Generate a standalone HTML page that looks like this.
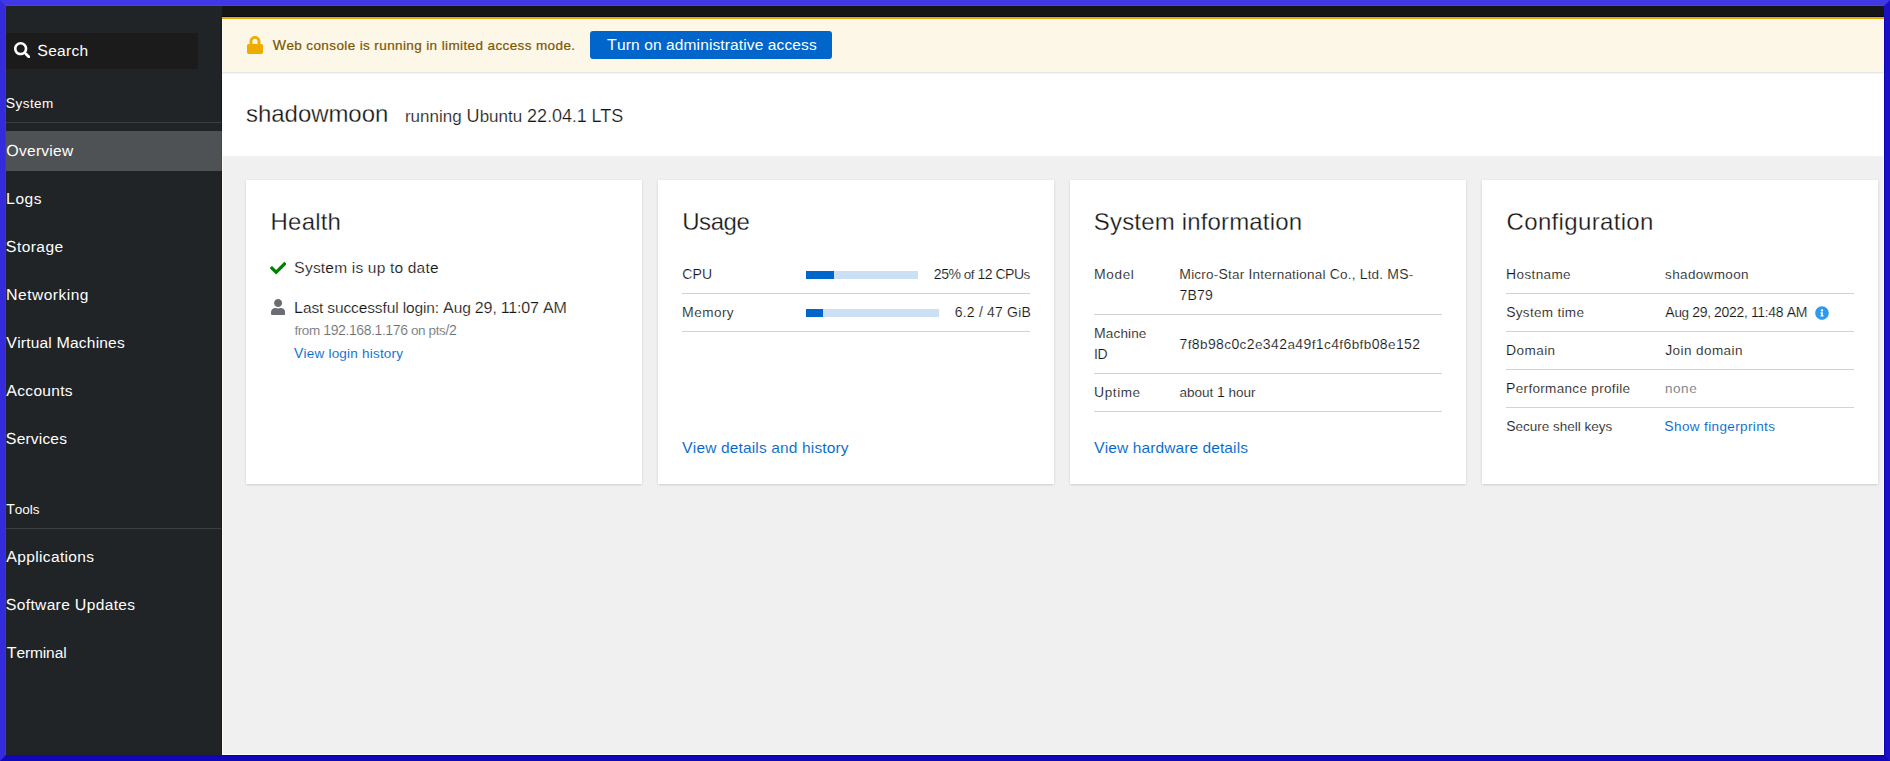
<!DOCTYPE html>
<html><head><meta charset="utf-8"><title>shadowmoon - Overview</title>
<style>
html,body{margin:0;padding:0;}
body{width:1890px;height:761px;overflow:hidden;position:relative;background:#f0f0f0;font-family:"Liberation Sans",sans-serif;}
.a{position:absolute;display:block}
.t{position:absolute;white-space:pre;line-height:1;text-rendering:auto;font-family:"Liberation Sans",sans-serif}
.t b{font-weight:normal}
#frame{position:absolute;left:0;top:0;width:1878px;height:749px;border-style:solid;border-width:6px;border-color:#4038e4 #1c10c4 #1008b8 #342cdc;pointer-events:none}
</style></head><body>
<div class="a" style="left:222px;top:6px;width:1662px;height:749px;background:#f0f0f0"></div>
<div class="a" style="left:6px;top:6px;width:216px;height:749px;background:#212427"></div>
<div class="a" style="left:6px;top:33px;width:192px;height:36px;background:#1b1b1b"></div>
<div class="a" style="left:6px;top:122px;width:216px;height:1px;background:#3c3f42"></div>
<div class="a" style="left:6px;top:131px;width:216px;height:40px;background:#4f5255"></div>
<div class="a" style="left:6px;top:528px;width:216px;height:1px;background:#3c3f42"></div>
<svg class="a" style="left:14px;top:42px" width="16.4" height="16.4" viewBox="0 0 512 512" preserveAspectRatio="none"><path fill="#fff" d="M505 442.7L405.3 343c-4.500-4.500-10.600-7-17-7H372c27.600-35.300 44-79.700 44-128C416 93.100 322.900 0 208 0S0 93.100 0 208s93.100 208 208 208c48.300 0 92.700-16.400 128-44v16.300c0 6.400 2.500 12.500 7 17l99.700 99.700c9.400 9.400 24.600 9.400 33.900 0l28.300-28.300c9.400-9.400 9.400-24.600.100-34zM208 336c-70.700 0-128-57.200-128-128 0-70.700 57.200-128 128-128 70.700 0 128 57.200 128 128 0 70.700-57.200 128-128 128z"/></svg>
<div class="a" style="left:222px;top:6px;width:1662px;height:11px;background:#151515"></div>
<div class="a" style="left:222px;top:17px;width:1662px;height:2px;background:#f0ab00"></div>
<div class="a" style="left:222px;top:72px;width:1662px;height:84px;background:#fff"></div>
<div class="a" style="left:222px;top:19px;width:1662px;height:53px;background:#fdf7e7;box-shadow:0 1px 2px 0 rgba(3,3,3,.12),0 0 2px 0 rgba(3,3,3,.06)"></div>
<svg class="a" style="left:247px;top:36px" width="16" height="18" viewBox="0 0 448 512" preserveAspectRatio="none"><path fill="#f0ab00" d="M400 224h-24v-72C376 68.200 307.800 0 224 0S72 68.200 72 152v72H48c-26.500 0-48 21.500-48 48v192c0 26.500 21.500 48 48 48h352c26.500 0 48-21.500 48-48V272c0-26.500-21.500-48-48-48zm-104 0H152v-72c0-39.700 32.300-72 72-72s72 32.300 72 72v72z"/></svg>
<div class="a" style="left:590px;top:31px;width:242px;height:28px;background:#0066cc;border-radius:3px"></div>
<div class="a" style="left:246px;top:180px;width:396px;height:304px;background:#fff;box-shadow:0 1px 2px 0 rgba(3,3,3,.12),0 0 2px 0 rgba(3,3,3,.06)"></div>
<div class="a" style="left:658px;top:180px;width:396px;height:304px;background:#fff;box-shadow:0 1px 2px 0 rgba(3,3,3,.12),0 0 2px 0 rgba(3,3,3,.06)"></div>
<div class="a" style="left:1070px;top:180px;width:396px;height:304px;background:#fff;box-shadow:0 1px 2px 0 rgba(3,3,3,.12),0 0 2px 0 rgba(3,3,3,.06)"></div>
<div class="a" style="left:1482px;top:180px;width:396px;height:304px;background:#fff;box-shadow:0 1px 2px 0 rgba(3,3,3,.12),0 0 2px 0 rgba(3,3,3,.06)"></div>
<svg class="a" style="left:269.8px;top:260px" width="16.4" height="16.4" viewBox="0 0 512 512" preserveAspectRatio="none"><path fill="#008000" d="M173.898 439.404l-166.400-166.400c-9.997-9.997-9.997-26.206 0-36.204l36.203-36.204c9.997-9.998 26.207-9.998 36.204 0L192 312.690 432.095 72.596c9.997-9.997 26.207-9.997 36.204 0l36.203 36.204c9.997 9.997 9.997 26.206 0 36.204l-294.400 294.401c-9.998 9.997-26.207 9.997-36.204-.001z"/></svg>
<svg class="a" style="left:271px;top:299px" width="14.2" height="16.2" viewBox="0 0 448 512" preserveAspectRatio="none"><path fill="#6a6e73" d="M224 256c70.700 0 128-57.300 128-128S294.700 0 224 0 96 57.300 96 128s57.300 128 128 128zm89.600 32h-16.700c-22.200 10.200-46.900 16-72.900 16s-50.600-5.800-72.900-16h-16.700C60.200 288 0 348.200 0 422.400V464c0 26.500 21.500 48 48 48h352c26.500 0 48-21.500 48-48v-41.600c0-74.200-60.200-134.400-134.400-134.400z"/></svg>
<div class="a" style="left:806px;top:271px;width:112px;height:8px;background:#cce0f5"></div>
<div class="a" style="left:806px;top:271px;width:28px;height:8px;background:#0066cc"></div>
<div class="a" style="left:682px;top:293px;width:348px;height:1px;background:#d2d2d2"></div>
<div class="a" style="left:806px;top:309px;width:133px;height:8px;background:#cce0f5"></div>
<div class="a" style="left:806px;top:309px;width:17px;height:8px;background:#0066cc"></div>
<div class="a" style="left:682px;top:331px;width:348px;height:1px;background:#d2d2d2"></div>
<div class="a" style="left:1094px;top:314px;width:348px;height:1px;background:#d2d2d2"></div>
<div class="a" style="left:1094px;top:373px;width:348px;height:1px;background:#d2d2d2"></div>
<div class="a" style="left:1094px;top:411px;width:348px;height:1px;background:#d2d2d2"></div>
<div class="a" style="left:1506px;top:293px;width:348px;height:1px;background:#d2d2d2"></div>
<div class="a" style="left:1506px;top:331px;width:348px;height:1px;background:#d2d2d2"></div>
<div class="a" style="left:1506px;top:369px;width:348px;height:1px;background:#d2d2d2"></div>
<div class="a" style="left:1506px;top:407px;width:348px;height:1px;background:#d2d2d2"></div>
<svg class="a" style="left:1815px;top:306px" width="14" height="14" viewBox="0 0 512 512" preserveAspectRatio="none"><path fill="#2b9af3" d="M256 8C119.043 8 8 119.083 8 256c0 136.997 111.043 248 248 248s248-111.003 248-248C504 119.083 392.957 8 256 8zm0 110c23.196 0 42 18.804 42 42s-18.804 42-42 42-42-18.804-42-42 18.804-42 42-42zm56 254c0 6.627-5.373 12-12 12h-88c-6.627 0-12-5.373-12-12v-24c0-6.627 5.373-12 12-12h12v-64h-12c-6.627 0-12-5.373-12-12v-24c0-6.627 5.373-12 12-12h64c6.627 0 12 5.373 12 12v100h12c6.627 0 12 5.373 12 12v24z"/></svg>
<div class="a" style="left:221px;top:19px;width:1px;height:112px;background:#181b1d"></div>
<div class="a" style="left:221px;top:131px;width:1px;height:40px;background:#46494c"></div>
<div class="a" style="left:221px;top:171px;width:1px;height:584px;background:#181b1d"></div>
<div class="a" style="left:222px;top:156px;width:1px;height:599px;background:#fdfdf6"></div>
<div class="a" style="left:222px;top:20px;width:1px;height:52px;background:#fffcf2"></div>
<div class="a" style="left:222px;top:754px;width:1662px;height:1px;background:#fdfdf6"></div>
<div class="a" style="left:1883px;top:156px;width:1px;height:599px;background:#fdfdf6"></div>
<div class="a" style="left:222px;top:16px;width:1662px;height:1px;background:#03081a"></div>
<div class="a" style="left:222px;top:19px;width:1662px;height:1px;background:#fffcf3"></div>
<span class="t" style="left:37.15px;top:43px;font-size:15.5px;letter-spacing:0.321px;color:#ffffff;"><b style="font-size:16px;text-rendering:geometricPrecision;">S</b>earch</span>
<span class="t" style="left:5.74px;top:96px;font-size:13.5px;letter-spacing:0.443px;color:#ffffff;"><b style="font-size:14px;">S</b>ystem</span>
<span class="t" style="left:6.23px;top:143px;font-size:15.5px;letter-spacing:0.280px;color:#ffffff;"><b style="font-size:16px;text-rendering:geometricPrecision;">O</b>verview</span>
<span class="t" style="left:6.02px;top:191px;font-size:15.5px;letter-spacing:0.501px;color:#ffffff;"><b style="font-size:16px;text-rendering:geometricPrecision;">L</b>ogs</span>
<span class="t" style="left:5.75px;top:239px;font-size:15.5px;letter-spacing:0.452px;color:#ffffff;"><b style="font-size:16px;text-rendering:geometricPrecision;">S</b>torage</span>
<span class="t" style="left:6.02px;top:287px;font-size:15.5px;letter-spacing:0.498px;color:#ffffff;"><b style="font-size:16px;text-rendering:geometricPrecision;">N</b>etworking</span>
<span class="t" style="left:6.25px;top:335px;font-size:15.5px;letter-spacing:0.204px;color:#ffffff;"><b style="font-size:16px;text-rendering:geometricPrecision;">V</b>irtual <b style="font-size:16px;text-rendering:geometricPrecision;">M</b>achines</span>
<span class="t" style="left:6.28px;top:383px;font-size:15.5px;letter-spacing:0.319px;color:#ffffff;"><b style="font-size:16px;text-rendering:geometricPrecision;">A</b>ccounts</span>
<span class="t" style="left:5.75px;top:431px;font-size:15.5px;letter-spacing:0.197px;color:#ffffff;"><b style="font-size:16px;text-rendering:geometricPrecision;">S</b>ervices</span>
<span class="t" style="left:6.24px;top:502px;font-size:13.5px;letter-spacing:0.009px;color:#ffffff;"><b style="font-size:14px;">T</b>ools</span>
<span class="t" style="left:6.28px;top:549px;font-size:15.5px;letter-spacing:0.349px;color:#ffffff;"><b style="font-size:16px;text-rendering:geometricPrecision;">A</b>pplications</span>
<span class="t" style="left:5.75px;top:597px;font-size:15.5px;letter-spacing:0.358px;color:#ffffff;"><b style="font-size:16px;text-rendering:geometricPrecision;">S</b>oftware <b style="font-size:16px;text-rendering:geometricPrecision;">U</b>pdates</span>
<span class="t" style="left:6.79px;top:645px;font-size:15.5px;letter-spacing:-0.117px;color:#ffffff;"><b style="font-size:16px;text-rendering:geometricPrecision;">T</b>erminal</span>
<span class="t" style="left:272.81px;top:38px;font-size:13.5px;letter-spacing:0.386px;color:#795600;-webkit-text-stroke:0.2px #795600;"><b style="font-size:14px;">W</b>eb console is running in limited access mode.</span>
<span class="t" style="left:607.09px;top:37px;font-size:15.5px;letter-spacing:0.122px;color:#ffffff;"><b style="font-size:16px;text-rendering:geometricPrecision;">T</b>urn on administrative access</span>
<span class="t" style="left:246.12px;top:102px;font-size:24px;letter-spacing:-0.066px;color:#151515;-webkit-text-stroke:0.28px #ffffff;">shadowmoon</span>
<span class="t" style="left:404.95px;top:107px;font-size:17px;letter-spacing:0.026px;color:#151515;-webkit-text-stroke:0.22px #ffffff;">running <b style="font-size:18px;">U</b>buntu <b style="font-size:18px;">22</b>.<b style="font-size:18px;">04</b>.<b style="font-size:18px;">1</b> <b style="font-size:18px;">LTS</b></span>
<span class="t" style="left:270.59px;top:210px;font-size:24px;letter-spacing:0.189px;color:#151515;-webkit-text-stroke:0.28px #ffffff;">Health</span>
<span class="t" style="left:294.11px;top:260px;font-size:15.5px;letter-spacing:0.192px;color:#151515;-webkit-text-stroke:0.18px #ffffff;"><b style="font-size:16px;text-rendering:geometricPrecision;">S</b>ystem is up to date</span>
<span class="t" style="left:294.12px;top:300px;font-size:15.5px;letter-spacing:-0.127px;color:#151515;-webkit-text-stroke:0.18px #ffffff;"><b style="font-size:16px;text-rendering:geometricPrecision;">L</b>ast successful login: <b style="font-size:16px;text-rendering:geometricPrecision;">A</b>ug <b style="font-size:16px;text-rendering:geometricPrecision;">29</b>, <b style="font-size:16px;text-rendering:geometricPrecision;">11</b>:<b style="font-size:16px;text-rendering:geometricPrecision;">07</b> <b style="font-size:16px;text-rendering:geometricPrecision;">AM</b></span>
<span class="t" style="left:294.38px;top:323px;font-size:13.5px;letter-spacing:-0.375px;color:#6a6e73;-webkit-text-stroke:0.15px #ffffff;">from <b style="font-size:14px;">192</b>.<b style="font-size:14px;">168</b>.<b style="font-size:14px;">1</b>.<b style="font-size:14px;">176</b> on pts<b style="font-size:14px;">/2</b></span>
<span class="t" style="left:294.01px;top:346px;font-size:13.5px;letter-spacing:0.215px;color:#0066cc;-webkit-text-stroke:0.08px #ffffff;"><b style="font-size:14px;">V</b>iew login history</span>
<span class="t" style="left:682.15px;top:210px;font-size:24px;letter-spacing:-0.419px;color:#151515;-webkit-text-stroke:0.28px #ffffff;">Usage</span>
<span class="t" style="left:682.22px;top:267px;font-size:13.5px;letter-spacing:0.137px;color:#151515;-webkit-text-stroke:0.15px #ffffff;"><b style="font-size:14px;">CPU</b></span>
<span class="t" style="left:933.85px;top:267px;font-size:13.5px;letter-spacing:-0.459px;color:#151515;-webkit-text-stroke:0.15px #ffffff;"><b style="font-size:14px;">25%</b> of <b style="font-size:14px;">12</b> <b style="font-size:14px;">CPU</b>s</span>
<span class="t" style="left:682.05px;top:305px;font-size:13.5px;letter-spacing:0.477px;color:#151515;-webkit-text-stroke:0.15px #ffffff;"><b style="font-size:14px;">M</b>emory</span>
<span class="t" style="left:954.82px;top:305px;font-size:13.5px;letter-spacing:0.243px;color:#151515;-webkit-text-stroke:0.15px #ffffff;"><b style="font-size:14px;">6</b>.<b style="font-size:14px;">2</b> <b style="font-size:14px;">/</b> <b style="font-size:14px;">47</b> <b style="font-size:14px;">G</b>i<b style="font-size:14px;">B</b></span>
<span class="t" style="left:681.99px;top:440px;font-size:15.5px;letter-spacing:0.149px;color:#0066cc;-webkit-text-stroke:0.08px #ffffff;"><b style="font-size:16px;text-rendering:geometricPrecision;">V</b>iew details and history</span>
<span class="t" style="left:1093.84px;top:210px;font-size:24px;letter-spacing:0.164px;color:#151515;-webkit-text-stroke:0.28px #ffffff;">System information</span>
<span class="t" style="left:1094.05px;top:267px;font-size:13.5px;letter-spacing:0.646px;color:#151515;-webkit-text-stroke:0.15px #ffffff;"><b style="font-size:14px;">M</b>odel</span>
<span class="t" style="left:1179.25px;top:267px;font-size:13.5px;letter-spacing:0.217px;color:#151515;-webkit-text-stroke:0.15px #ffffff;"><b style="font-size:14px;">M</b>icro-<b style="font-size:14px;">S</b>tar <b style="font-size:14px;">I</b>nternational <b style="font-size:14px;">C</b>o., <b style="font-size:14px;">L</b>td. <b style="font-size:14px;">MS</b>-</span>
<span class="t" style="left:1179.44px;top:288px;font-size:13.5px;letter-spacing:0.251px;color:#151515;-webkit-text-stroke:0.15px #ffffff;"><b style="font-size:14px;">7B79</b></span>
<span class="t" style="left:1094.05px;top:326px;font-size:13.5px;letter-spacing:0.142px;color:#151515;-webkit-text-stroke:0.15px #ffffff;"><b style="font-size:14px;">M</b>achine</span>
<span class="t" style="left:1094.03px;top:347px;font-size:13.5px;letter-spacing:-0.427px;color:#151515;-webkit-text-stroke:0.15px #ffffff;"><b style="font-size:14px;">ID</b></span>
<span class="t" style="left:1179.44px;top:337px;font-size:13.5px;letter-spacing:0.394px;color:#151515;-webkit-text-stroke:0.15px #ffffff;"><b style="font-size:14px;">7</b>f<b style="font-size:14px;">8</b>b<b style="font-size:14px;">98</b>c<b style="font-size:14px;">0</b>c<b style="font-size:14px;">2</b>e<b style="font-size:14px;">342</b>a<b style="font-size:14px;">49</b>f<b style="font-size:14px;">1</b>c<b style="font-size:14px;">4</b>f<b style="font-size:14px;">6</b>bfb<b style="font-size:14px;">08</b>e<b style="font-size:14px;">152</b></span>
<span class="t" style="left:1094.08px;top:385px;font-size:13.5px;letter-spacing:0.571px;color:#151515;-webkit-text-stroke:0.15px #ffffff;"><b style="font-size:14px;">U</b>ptime</span>
<span class="t" style="left:1179.49px;top:385px;font-size:13.5px;letter-spacing:-0.004px;color:#151515;-webkit-text-stroke:0.15px #ffffff;">about <b style="font-size:14px;">1</b> hour</span>
<span class="t" style="left:1093.99px;top:440px;font-size:15.5px;letter-spacing:0.098px;color:#0066cc;-webkit-text-stroke:0.08px #ffffff;"><b style="font-size:16px;text-rendering:geometricPrecision;">V</b>iew hardware details</span>
<span class="t" style="left:1506.53px;top:210px;font-size:24px;letter-spacing:0.341px;color:#151515;-webkit-text-stroke:0.28px #ffffff;">Configuration</span>
<span class="t" style="left:1506.05px;top:267px;font-size:13.5px;letter-spacing:0.376px;color:#151515;-webkit-text-stroke:0.15px #ffffff;"><b style="font-size:14px;">H</b>ostname</span>
<span class="t" style="left:1665.09px;top:268px;font-size:13.5px;letter-spacing:0.349px;color:#151515;-webkit-text-stroke:0.15px #ffffff;">shadowmoon</span>
<span class="t" style="left:1506.13px;top:305px;font-size:13.5px;letter-spacing:0.318px;color:#151515;-webkit-text-stroke:0.15px #ffffff;"><b style="font-size:14px;">S</b>ystem time</span>
<span class="t" style="left:1665.35px;top:305px;font-size:13.5px;letter-spacing:-0.308px;color:#151515;-webkit-text-stroke:0.15px #ffffff;"><b style="font-size:14px;">A</b>ug <b style="font-size:14px;">29</b>, <b style="font-size:14px;">2022</b>, <b style="font-size:14px;">11</b>:<b style="font-size:14px;">48</b> <b style="font-size:14px;">AM</b></span>
<span class="t" style="left:1506.05px;top:343px;font-size:13.5px;letter-spacing:0.426px;color:#151515;-webkit-text-stroke:0.15px #ffffff;"><b style="font-size:14px;">D</b>omain</span>
<span class="t" style="left:1665.16px;top:343px;font-size:13.5px;letter-spacing:0.422px;color:#151515;-webkit-text-stroke:0.15px #ffffff;"><b style="font-size:14px;">J</b>oin domain</span>
<span class="t" style="left:1506.05px;top:381px;font-size:13.5px;letter-spacing:0.327px;color:#151515;-webkit-text-stroke:0.15px #ffffff;"><b style="font-size:14px;">P</b>erformance profile</span>
<span class="t" style="left:1664.93px;top:382px;font-size:13.5px;letter-spacing:0.586px;color:#6a6e73;-webkit-text-stroke:0.15px #ffffff;">none</span>
<span class="t" style="left:1506.13px;top:419px;font-size:13.5px;letter-spacing:-0.009px;color:#151515;-webkit-text-stroke:0.15px #ffffff;"><b style="font-size:14px;">S</b>ecure shell keys</span>
<span class="t" style="left:1664.33px;top:419px;font-size:13.5px;letter-spacing:0.375px;color:#0066cc;-webkit-text-stroke:0.08px #ffffff;"><b style="font-size:14px;">S</b>how fingerprints</span>
<div id="frame"></div>
<div class="a" style="left:222px;top:755px;width:1662px;height:1px;background:#0000b0"></div>
<div class="a" style="left:1884px;top:19px;width:1px;height:736px;background:#0a00bc"></div>
<div class="a" style="left:6px;top:5px;width:1878px;height:1px;background:#4842ee"></div>
<div class="a" style="left:5px;top:6px;width:1px;height:749px;background:#3a32e4"></div>
</body></html>
